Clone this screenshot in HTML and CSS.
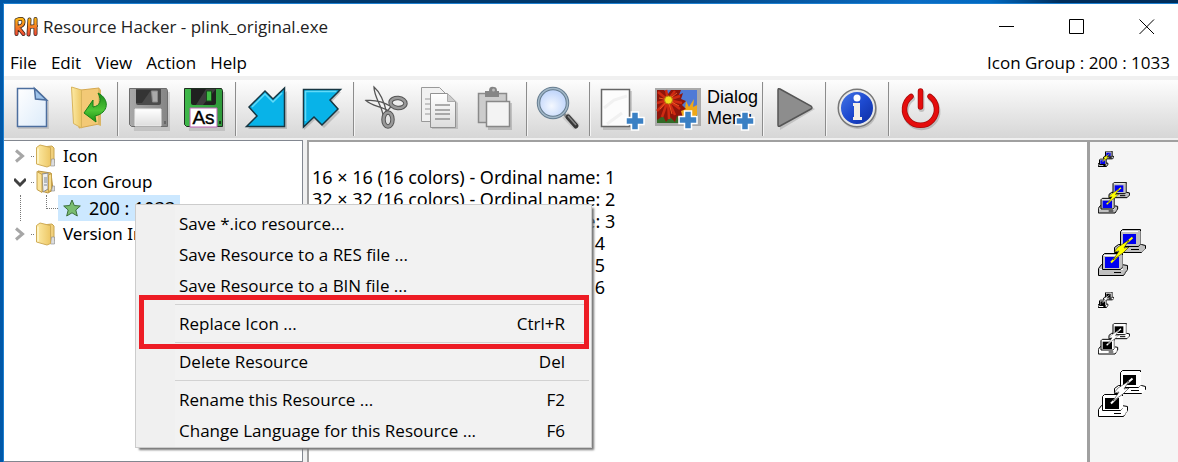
FILE: index.html
```
<!DOCTYPE html>
<html lang="en">
<head>
<meta charset="utf-8">
<title>Resource Hacker - plink_original.exe</title>
<link rel="stylesheet" href="styles.css">
</head>
<body>
<svg class="defs" aria-hidden="true">
  <defs>
    <linearGradient id="paper" x1="0" y1="0" x2="1" y2="1"><stop offset="0" stop-color="#fff"/><stop offset="1" stop-color="#dcebfa"/></linearGradient>
    <linearGradient id="gold" x1="0" y1="0" x2="1" y2="0"><stop offset="0" stop-color="#fdeba6"/><stop offset="1" stop-color="#edc765"/></linearGradient>
    <linearGradient id="leaf" x1="0" y1="0" x2="0" y2="1"><stop offset="0" stop-color="#1a8a1a"/><stop offset=".6" stop-color="#4ec536"/><stop offset="1" stop-color="#189010"/></linearGradient>
    <linearGradient id="steel" x1="0" y1="0" x2="1" y2="0"><stop offset="0" stop-color="#a8a8a8"/><stop offset="1" stop-color="#858585"/></linearGradient>
    <linearGradient id="label" x1="0" y1="0" x2="0" y2="1"><stop offset="0" stop-color="#fff"/><stop offset="1" stop-color="#ddd"/></linearGradient>
    <linearGradient id="grass" x1="0" y1="0" x2="1" y2="0"><stop offset="0" stop-color="#3fb94a"/><stop offset="1" stop-color="#2f9a3b"/></linearGradient>
    <linearGradient id="fire" x1="0" y1="0" x2="0" y2="1"><stop offset="0" stop-color="#fdb515"/><stop offset="1" stop-color="#ee4a35"/></linearGradient>
    <linearGradient id="info" x1="0" y1="0" x2="1" y2="1"><stop offset="0" stop-color="#4a7be8"/><stop offset=".5" stop-color="#1d49cf"/><stop offset="1" stop-color="#0b2a9c"/></linearGradient>
    <radialGradient id="lens" cx=".45" cy=".6"><stop offset="0" stop-color="#f4f8ff"/><stop offset="1" stop-color="#c4d8fb"/></radialGradient>
    <symbol id="plus" viewBox="0 0 20 20"><path d="M6.500 1h7v5.500h5.500v7h-5.500V19h-7v-5.500H1v-7h5.500z" fill="#3a80c4" stroke="#fff" stroke-width="1.500"/></symbol>
    <symbol id="folder" viewBox="0 0 22 24">
      <path d="M7 3l10-1 2 2v15l-3 2-8-1z" fill="#f0cf7c" stroke="#c9a44c"/>
      <path d="M16.500 15h3v7h-4z" fill="#ddd" stroke="#888" stroke-width=".6"/>
      <path d="M1.500 3.500L5 1l10.500 2.500v18L12 23 1.500 20z" fill="url(#gold)" stroke="#d0ac57"/>
      <path d="M3 4.500v15" stroke="#fff8d0" stroke-width="1.500"/>
    </symbol>
    <symbol id="folder-open" viewBox="0 0 22 24">
      <path d="M3 1l13 2 2 17-5 3-10-3z" fill="#edc96f" stroke="#b99340"/>
      <path d="M7 4l6-1v16l-5 3z" fill="#eee" stroke="#8b8b8b"/>
      <path d="M9 8h3M9 10h3M9 12h3M9 15h3" stroke="#7d8794"/>
      <path d="M2 1.500l5 3v18l-5-3z" fill="#fbe49a" stroke="#c5a04a"/>
      <path d="M13.500 5l3-1.500V19l-3 3.500z" fill="#f7dc8d" stroke="#c5a04a"/>
      <path d="M17.500 16h2v5h-3z" fill="#ddd" stroke="#888" stroke-width=".6"/>
    </symbol>
    <symbol id="chev" viewBox="0 0 12 14"><path d="M2 1.500L8.500 7 2 12.500" fill="none" stroke="#a6a6a6" stroke-width="3"/></symbol>
    <symbol id="computers" viewBox="0 0 48 48">
      <g stroke-width="1">
        <path class="case" d="M20.500 15.500h23l4 1v3l-4 4h-27v-5z"/>
        <path class="case" d="M24.500.500h18v15l-2 2h-18v-15z"/>
        <path class="shade" d="M40.500 17l2-2V2M44 23l3-3"/>
        <path class="lit" d="M24 2.500h16"/>
        <path class="screen" d="M25 5h13v10H25z"/>
        <path class="slot" d="M33 20.500h8"/>
        <path class="case" d="M3.500 35.500h20l6 1v4l-4 6h-25v-7z"/>
        <path class="lit" d="M2 40.500h23"/>
        <path class="case" d="M6.500 24.500h18v14l-2 2h-18v-14z"/>
        <path class="shade" d="M22.500 40l2-2V26M26 45l3-4"/>
        <path class="lit" d="M6 26.500h16"/>
        <path class="screen" d="M7 28h14v11H7z"/>
        <path class="slot" d="M16 43.500h7"/>
        <path class="spark" d="M34.500 8.500l-8 7M20 26.500l-7 7"/>
        <path class="bolt" d="M31 11L20 18l-4 5 5-1-6 9 10-7 6-6-5 1z"/>
      </g>
    </symbol>
  </defs>
</svg>

<main class="window">
  <header class="titlebar">
    <svg class="app-icon" viewBox="0 0 26 22" aria-hidden="true">
      <g fill="none" stroke-linejoin="round" stroke-linecap="round">
        <path d="M3.500 18V4q7-3 7 2 0 4-6 5 3 3 6 7M15.500 18.500l1-15M22.500 18V3M16 11l7-1" stroke="#33231c" stroke-width="4"/>
        <path d="M3.500 18V4q7-3 7 2 0 4-6 5 3 3 6 7M15.500 18.500l1-15M22.500 18V3M16 11l7-1" stroke="url(#fire)" stroke-width="2.500"/>
      </g>
    </svg>
    <h1>Resource Hacker - plink_original.exe</h1>
    <div class="caption">
      <button aria-label="Minimize"><svg viewBox="0 0 16 16"><path d="M0 7.500h15"/></svg></button>
      <button aria-label="Maximize"><svg viewBox="0 0 16 16"><path d="M.500.500h14v14H.500z"/></svg></button>
      <button aria-label="Close"><svg viewBox="0 0 16 16"><path d="M.500.500l14.500 14.500M15 .500L.500 15"/></svg></button>
    </div>
  </header>

  <nav class="menubar">
    <button>File</button><button>Edit</button><button>View</button><button>Action</button><button>Help</button>
    <span class="status">Icon Group : 200 : 1033</span>
  </nav>

  <div class="toolbar" role="toolbar">
    <button aria-label="New"><svg viewBox="0 0 54 56">
      <path d="M14 8h19l12 12v28H14z" fill="#777" opacity=".25"/>
      <path d="M13.500 7.500h17l12 11.500v26.500h-29z" fill="url(#paper)" stroke="#4c6e9e" stroke-width="1.500"/>
      <path d="M30.500 7.500l12 11.500-11-1z" fill="#9ec3ea" stroke="#4c6e9e" stroke-width="1.500"/></svg></button>
    <button aria-label="Open"><svg viewBox="0 0 54 56">
      <path d="M22 9l18-2v36l-20 4z" fill="#f3c976" stroke="#d5a850"/>
      <path d="M40 7l2 2v36l-3-1z" fill="#d9b565"/>
      <path d="M12.500 6l10 3v38l-8-4.500z" fill="url(#gold)" stroke="#d8b45c"/>
      <path d="M39 12c12 6 11 20-3 23l1 6-12-9 9-13v7c7-1 9-6 5-14z" fill="url(#leaf)" stroke="#17801a"/></svg></button>
    <i class="sep"></i>
    <button aria-label="Save"><svg viewBox="0 0 54 56">
      <path d="M10 11h38v39H12z" fill="#777" opacity=".25"/>
      <path d="M7.500 7.500h37l1 2v36h-36l-2-2z" fill="url(#steel)" stroke="#6d6d6d"/>
      <path d="M14 8h25v14q0 2-2 2H16q-2 0-2-2z" fill="#4b4b4b"/><path d="M14 9h15l-9 13h-6z" fill="#343434"/>
      <path d="M29.500 10h6v11h-5z" fill="#aaa" stroke="#888"/>
      <path d="M13 28h26v17H13z" fill="url(#label)" stroke="#eee"/>
      <path d="M42 40h2v3h-2z" fill="#666"/></svg></button>
    <button aria-label="Save as"><svg viewBox="0 0 54 56">
      <path d="M10 11h38v39H12z" fill="#777" opacity=".25"/>
      <path d="M7.500 7.500h37l1 2v36h-36l-2-2z" fill="url(#grass)" stroke="#202e22"/>
      <path d="M14 8h25v14q0 2-2 2H16q-2 0-2-2z" fill="#202020"/><path d="M29 8h10L26 24h-7z" fill="#3d3d3d"/>
      <path d="M29.500 10h5v10h-5z" fill="#41bd45" stroke="#174f1c"/>
      <path d="M13 27h27v19H13z" fill="#fff" stroke="#bd62b7"/>
      <path d="M42 40h2v3h-2z" fill="#153b18"/>
      <text class="as" x="26.500" y="43" text-anchor="middle">As</text></svg></button>
    <i class="sep"></i>
    <button aria-label="Compile down"><svg viewBox="0 0 54 56">
      <path d="M7 46l10-11-7-9 16-17 8 9L46 8v38z" fill="#888" opacity=".4" transform="translate(1 2)"/>
      <path d="M6.500 45.500L17 35l-8-9L25 10l8 8L44.500 7v38.500z" fill="#08b3e8" stroke="#173642" stroke-width="1.500"/>
      <path d="M12 26L25 13l8 8 9-9" fill="none" stroke="#62daf8" stroke-width="1.500"/></svg></button>
    <button aria-label="Compile up"><svg viewBox="0 0 54 56">
      <path d="M8 9h37L35 20l9 9-16 16-9-8L8 47z" fill="#888" opacity=".4" transform="translate(1 2)"/>
      <path d="M8.500 8.500h37L35 19l8 9-16 16-8-8L8.500 46z" fill="#08b3e8" stroke="#173642" stroke-width="1.500"/>
      <path d="M10.500 40V10.500h31" fill="none" stroke="#62daf8" stroke-width="1.500"/></svg></button>
    <i class="sep"></i>
    <button aria-label="Cut"><svg viewBox="0 0 54 56">
      <path d="M8 19.500c10-1 17 1 25 6l-3 4c-7-4-17-5-22-10zM16 6c6 5 10 14 13 27l-4 1C24 25 16 16 16 6z" fill="#f2f2f2" stroke="#555" stroke-width="1.300"/>
      <g fill="none"><ellipse cx="40" cy="22" rx="7.500" ry="5" stroke="#555" stroke-width="4.500" transform="rotate(5 40 22)"/><ellipse cx="30" cy="38.500" rx="4.500" ry="7" stroke="#555" stroke-width="4.500"/>
      <ellipse cx="40" cy="22" rx="7.500" ry="5" stroke="#999" stroke-width="2.500" transform="rotate(5 40 22)"/><ellipse cx="30" cy="38.500" rx="4.500" ry="7" stroke="#999" stroke-width="2.500"/></g></svg></button>
    <button aria-label="Copy"><svg viewBox="0 0 54 56">
      <path d="M8.500 6.500h18l8 8v26h-26z" fill="#f1f1f1" stroke="#999"/>
      <path d="M12 18h6M12 23h6M12 28h6M12 33h6" stroke="#999"/>
      <path d="M19 14h18l8 8v26H19z" fill="#777" opacity=".3"/>
      <path d="M17.500 12.500h17l8 8v26h-25z" fill="url(#label)" stroke="#929292"/>
      <path d="M34.500 12.500v8h8" fill="#ccc" stroke="#aaa"/>
      <path d="M22 24h15M22 29h15M22 33h15M22 38h15" stroke="#929292" stroke-width="1.300"/></svg></button>
    <button aria-label="Paste"><svg viewBox="0 0 54 56">
      <path d="M10.500 12.500h28v29h-28z" fill="#ccc" stroke="#8a8a8a" stroke-width="1.500"/>
      <path d="M17 10h4q0-5 5-4 3 0 3 4h2v6H17z" fill="#858585"/><circle cx="25.500" cy="9" r="1.500" fill="#bbb"/>
      <path d="M20 22h24v27H20z" fill="#777" opacity=".35"/>
      <path d="M18.500 20.500h23v25h-23z" fill="#f3f3f3" stroke="#888" stroke-width="1.500"/></svg></button>
    <i class="sep"></i>
    <button aria-label="Find"><svg viewBox="0 0 54 56">
      <path d="M34 34l12 12" stroke="#aaa" stroke-width="8" opacity=".4"/>
      <path d="M32 32l5 5" stroke="#888" stroke-width="3"/>
      <path d="M37 36l8 9" stroke="#383838" stroke-width="5" stroke-linecap="round"/><path d="M37 35l8 9" stroke="#888" stroke-width="1.500"/>
      <circle cx="22" cy="22" r="14.500" fill="url(#lens)" stroke="#667d90" stroke-width="3.500"/><circle cx="22" cy="22" r="14.500" fill="none" stroke="#a2b7c7" stroke-width="1.500"/></svg></button>
    <i class="sep"></i>
    <button aria-label="Add resource"><svg viewBox="0 0 54 56">
      <path d="M9 10h29v39H9z" fill="#777" opacity=".3"/><path d="M7.500 8.500h28v37h-28z" fill="#fcfcfc" stroke="#666" stroke-width="1.500"/>
      <path d="M10 27l10-8 13-4M13 43l15-11" fill="none" stroke="#f1f1f1" stroke-width="3"/><use href="#plus" x="31" y="30" width="20" height="20"/></svg></button>
    <button aria-label="Add image"><svg viewBox="0 0 54 56">
      <path d="M6 7h46v38H6z" fill="#aaa"/><path d="M8 9h40v33H8z" fill="#4f7ad6"/>
      <path d="M8 32h40v10H8z" fill="#326b27"/>
      <path d="M31 27l5 1 1-8 3 6 5-8-1 8 4-2v10l-9 8-10-5z" fill="#f0a818"/>
      <path d="M8 9h7l4 4 3-4h10l-2 5 4-2-2 6 5 2-4 4 4 4-5 2 2 7-6-2-2 6-5-5-4 5-3-6-6 4z" fill="#8e150b"/>
      <path d="M19 19L9 11M19 19L17 9M19 19l7-9M19 19l12-4M19 19l14 3M19 19l12 9M19 19l7 15M19 19l1 19M19 19l-6 17M19 19L8 30M19 19L8 22" stroke="#cf2a12" stroke-width="2.500"/>
      <path d="M19 19l9-7M19 19l11 6M19 19l4 14M19 19l-8 9M19 19l-9-2" stroke="#ee5a22"/>
      <circle cx="19.500" cy="19" r="4" fill="#f3de1f" stroke="#b57b10"/><use href="#plus" x="29" y="29" width="20" height="20"/></svg></button>
    <button aria-label="Add dialog or menu"><svg viewBox="0 0 54 56">
      <text class="dlg" x="3" y="22">Dialog</text><text class="dlg" x="3" y="43">Menu</text>
      <use href="#plus" x="31" y="30" width="20" height="20"/></svg></button>
    <i class="sep"></i>
    <button aria-label="Run"><svg viewBox="0 0 54 56">
      <path d="M12 11l36 17-35 21z" fill="#777" opacity=".3"/><path d="M11 9q0-2 2-1l31 17q2 2 0 3L13 45q-2 1-2-1z" fill="#8d8d8d" stroke="#555" stroke-width="1.500"/></svg></button>
    <i class="sep"></i>
    <button aria-label="About"><svg viewBox="0 0 54 56">
      <circle cx="28" cy="29" r="19" fill="#777" opacity=".35"/><circle cx="27" cy="27" r="18" fill="url(#info)" stroke="#777" stroke-width="3"/><circle cx="27" cy="27" r="17" fill="none" stroke="#e8e8e8" stroke-width="2"/>
      <circle cx="27" cy="17" r="3.500" fill="#fff"/><path d="M23 22h7v14h2v3h-9v-3h1V25h-1z" fill="#f2efe8"/></svg></button>
    <i class="sep"></i>
    <button aria-label="Exit"><svg viewBox="0 0 54 56" fill="none" stroke-linecap="round">
      <path d="M18 16.500a16 16 0 1 0 19 0M27.500 11v16" stroke="#777" stroke-width="6" opacity=".35" transform="translate(1 1)"/>
      <path d="M18 15.500a16 16 0 1 0 19 0M27.500 10v16" stroke="#a80b0b" stroke-width="5.500"/><path d="M18 15.500a16 16 0 1 0 19 0M27.500 10v16" stroke="#e50d0d" stroke-width="4"/></svg></button>
  </div>

  <div class="panes">
    <section class="tree">
      <ul role="tree">
        <li role="treeitem"><svg class="chev"><use href="#chev"/></svg><i class="dots"></i><svg class="folder"><use href="#folder"/></svg><span>Icon</span></li>
        <li role="treeitem"><svg class="chev" viewBox="0 0 12 14"><path d="M0 4l6 6 6-6" fill="none" stroke="#404040" stroke-width="3"/></svg><i class="dots"></i><svg class="folder"><use href="#folder-open"/></svg><span>Icon Group</span></li>
        <li role="treeitem" class="child"><i class="guide"></i><i class="elbow"></i>
          <span class="selected"><svg class="star" viewBox="0 0 18 18"><path d="M9 1l2.300 5.500 6 .500-4.500 4 1.500 6L9 13.800 3.700 17l1.500-6L.700 7l6-.500z" fill="#79bd70" stroke="#3c6f3b"/></svg>200 : 1033</span></li>
        <li role="treeitem"><svg class="chev"><use href="#chev"/></svg><i class="dots"></i><svg class="folder"><use href="#folder"/></svg><span>Version Info</span></li>
      </ul>
    </section>
    <section class="details">
      <p>16 × 16 (16 colors) - Ordinal name: 1</p>
      <p>32 × 32 (16 colors) - Ordinal name: 2</p>
      <p>48 × 48 (16 colors) - Ordinal name: 3</p>
      <p>16 × 16 (2 colors) - Ordinal name: 4</p>
      <p>32 × 32 (2 colors) - Ordinal name: 5</p>
      <p>48 × 48 (2 colors) - Ordinal name: 6</p>
    </section>
    <aside class="preview">
      <svg class="s16"><use href="#computers"/></svg>
      <svg class="s32"><use href="#computers"/></svg>
      <svg class="s48"><use href="#computers"/></svg>
      <svg class="s16 mono"><use href="#computers"/></svg>
      <svg class="s32 mono"><use href="#computers"/></svg>
      <svg class="s48 mono"><use href="#computers"/></svg>
    </aside>
  </div>
</main>

<div class="context" role="menu">
  <button role="menuitem">Save *.ico resource...</button>
  <button role="menuitem">Save Resource to a RES file ...</button>
  <button role="menuitem">Save Resource to a BIN file ...</button>
  <hr>
  <button role="menuitem" class="marked">Replace Icon ...<kbd>Ctrl+R</kbd></button>
  <hr>
  <button role="menuitem">Delete Resource<kbd>Del</kbd></button>
  <hr>
  <button role="menuitem">Rename this Resource ...<kbd>F2</kbd></button>
  <button role="menuitem">Change Language for this Resource ...<kbd>F6</kbd></button>
</div>
</body>
</html>
```
FILE: styles.css
```
* { box-sizing: border-box; }
html, body { height: 100%; }
body {
  margin: 0;
  padding: 3px 0 0 3px;
  overflow: hidden;
  background: linear-gradient(90deg, #0058a8 0%, #00386c 30%, #00386c 50%, #0a6cc4 78%, #0068c0 84%, #002d5a 90%, #002d5a 100%);
  font: 17px/22px "Open Sans", "Noto Sans", sans-serif;
  color: #000;
}
button { font: inherit; color: inherit; background: none; border: 0; padding: 0; margin: 0; }
svg { display: block; flex: none; }
.defs { position: absolute; width: 0; height: 0; }

.window {
  display: flex;
  flex-direction: column;
  height: 100%;
  background: #f0f0f0;
  border: 1px solid #1c7fd0;
  border-width: 1px 0 0 1px;
}

.titlebar { display: flex; align-items: center; height: 46px; padding: 0 23px 0 9px; background: #fff; }
.app-icon { width: 26px; height: 22px; }
h1 { flex: 1; margin: 0 0 0 4px; font-size: 17px; font-weight: 400; color: #222; }
.caption { display: flex; gap: 54px; }
.caption svg { width: 16px; height: 16px; fill: none; stroke: #000; }

.menubar { display: flex; align-items: center; gap: 14px; height: 26px; padding: 0 8px 0 6px; background: #fff; }
.status { margin-left: auto; }

.toolbar {
  display: flex;
  align-items: center;
  height: 58px;
  margin: 4px 0 2px;
  background: linear-gradient(#fdfdfd, #d6d6d6);
}
.toolbar button { width: 55px; }
.toolbar svg { width: 54px; height: 56px; }
.sep { flex: none; width: 2px; height: 54px; margin: 0 3px; background: #8c8c8c; border-right: 1px solid #f4f4f4; }
.as { font: 19px "Liberation Sans", sans-serif; stroke: #000; stroke-width: .4px; }
.dlg { font: 18px "Liberation Sans", sans-serif; }

.panes { flex: 1; display: flex; min-height: 0; font-family: "Noto Sans", sans-serif; }
.tree { width: 299px; margin-right: 4px; padding-top: 2px; background: #fff; border: 1px solid #828790; border-left: 0; }
.tree ul { margin: 0; padding: 0; list-style: none; }
.tree li { display: flex; align-items: center; height: 26px; padding-left: 10px; white-space: nowrap; }
.chev { width: 12px; height: 14px; }
.dots { width: 3px; margin: 0 1px 0 5px; border-top: 1px dotted #777; }
.folder { width: 22px; height: 24px; margin-right: 6px; }
.guide { height: 26px; margin: 0 25px 0 6px; border-left: 1px dotted #777; }
.elbow { width: 12px; height: 14px; margin-bottom: 12px; border: 1px dotted #777; border-width: 0 0 1px 1px; }
.selected { display: flex; align-items: center; gap: 8px; height: 26px; padding: 0 5px; background: #cce8ff; font-size: 18px; }
.star { width: 18px; height: 18px; }

.details { flex: 1; padding: 24px 3px; background: #fff; border: 2px solid #a0a0a0; border-width: 2px 0 0 2px; font-size: 18px; }
.details p { margin: 0; }

.preview {
  width: 91px;
  display: flex;
  flex-direction: column;
  align-items: flex-start;
  gap: 15px;
  padding: 9px 8px;
  background: #f5f5f5;
  border: 2px solid #a0a0a0;
  border-width: 2px 0 0 3px;
}
.preview svg { --case: #c0c0c0; --screen: #0000f0; --bolt: #ffff00; --shade: #808080; --lit: #fff; }
.preview .mono { --case: #fff; --screen: #000; --bolt: #fff; --shade: #fff; }
.s16 { width: 16px; height: 16px; }
.s32 { width: 32px; height: 32px; }
.s48 { width: 48px; height: 48px; }
.case, .slot { stroke: #000; vector-effect: non-scaling-stroke; }
.case { fill: var(--case); }
.screen { fill: var(--screen); }
.bolt { fill: var(--bolt); stroke: #000; stroke-width: .5px; }
.spark { stroke: var(--bolt); stroke-width: 2px; }
.shade { fill: none; stroke: var(--shade); }
.lit { stroke: var(--lit); }

.context {
  position: absolute;
  left: 135px;
  top: 204px;
  width: 457px;
  padding: 3px 2px 1px;
  background: linear-gradient(90deg, #f0f0f0 39px, #f2f2f2 39px);
  border: 1px solid #ccc;
  box-shadow: 3px 3px 2px -1px #777;
}
.context button { display: flex; align-items: center; width: 100%; height: 31px; padding: 0 24px 0 41px; text-align: left; }
.context hr { height: 1px; margin: 3px 0 3px 37px; border: 0; background: #d2d2d2; }
.context kbd { margin-left: auto; font: inherit; }
.context .marked { position: relative; }
.marked::after { content: ""; position: absolute; inset: -13px 0 -10px 1px; border: 5px solid #ed1c24; }
```
